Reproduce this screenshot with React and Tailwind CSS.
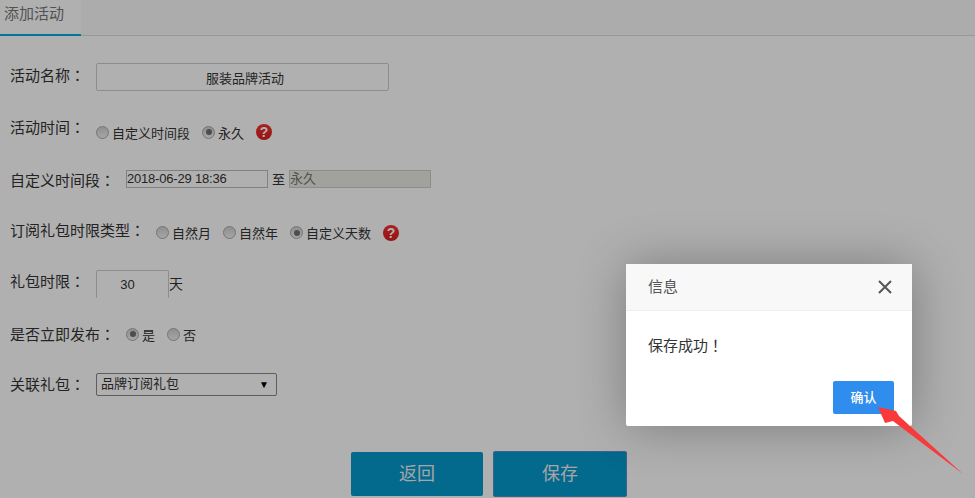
import React from "react";

const font = { fontFamily: '"Liberation Sans", "Noto Sans CJK SC", sans-serif' };

// the centred full-width punctuation comes from the TC cut
const Punct = ({ children }) => (
  <span className="font-['Noto_Sans_CJK_TC']">{children}</span>
);

const Radio = ({ label, checked }) => (
  <span className="flex items-center gap-[3px]">
    <span className="flex h-[13px] w-[13px] items-center justify-center rounded-full border border-[#a8a8a8] bg-gradient-to-b from-[#d0d0d0] to-[#f0f0f0]">
      {checked && <span className="h-[6px] w-[6px] rounded-full bg-[#707070]" />}
    </span>
    <span className="mt-[3px] text-[13px] leading-[16px]">{label}</span>
  </span>
);

const Help = () => (
  <span className="flex h-4 w-4 items-center justify-center rounded-full bg-gradient-to-b from-[#f43030] to-[#dc1c1c] text-[14px] font-bold leading-none text-white">
    ?
  </span>
);

const App = () => {
  return (
    <div
      className="relative h-[498px] w-[975px] overflow-hidden bg-white text-[#333]"
      style={font}
    >
      {/* TAB */}
      <div className="flex h-[36px] border-b border-[#ddd] bg-[#fafafa]">
        <div className="h-[36px] w-[81px] border-b-2 border-[#06a9e0] bg-white pl-[4px] pt-[3px] text-[15px] leading-[22px] text-[#777]">
          添加活动
        </div>
      </div>

      {/* FORM */}
      <div className="flex flex-col pl-[10px] pt-[27px] text-[15px]">
        <div className="flex h-[28px] items-center">
          <span className="mb-[3px] w-[86px]">活动名称<Punct>：</Punct></span>
          <input
            readOnly
            value="服装品牌活动"
            className="h-[28px] w-[293px] rounded-[2px] border border-[#ccc] pl-[5px] text-center text-[13px]"
          />
        </div>

        <div className="mt-[26px] flex h-[28px] items-center">
          <span className="mb-[6px] w-[86px]">活动时间<Punct>：</Punct></span>
          <span className="mt-[2px] flex items-center gap-[12px]">
            <Radio label="自定义时间段" />
            <Radio label="永久" checked />
            <Help />
          </span>
        </div>

        <div className="mt-[20px] flex h-[28px] items-center">
          <span className="mt-[4px] w-[116px]">自定义时间段<Punct>：</Punct></span>
          <input
            readOnly
            value="2018-06-29 18:36"
            className="h-[18px] w-[142px] border border-[#bbb] px-0 text-[13px] tracking-[-0.2px]"
          />
          <span className="mx-[4px] mt-[2px] text-[13px]">至</span>
          <input
            readOnly
            value="永久"
            className="h-[18px] w-[142px] border border-[#ccc] bg-[#ebebe4] text-[13px] text-[#777]"
          />
        </div>

        <div className="mt-[25px] flex h-[28px] items-center">
          <span className="mb-[2px] w-[146px]">订阅礼包时限类型<Punct>：</Punct></span>
          <span className="mt-[1px] flex items-center gap-[12px]">
            <Radio label="自然月" />
            <Radio label="自然年" />
            <Radio label="自定义天数" checked />
            <Help />
          </span>
        </div>

        <div className="mt-[24px] flex h-[28px] items-center">
          <span className="mb-[4px] w-[86px]">礼包时限<Punct>：</Punct></span>
          <input
            readOnly
            value="30"
            className="h-[28px] w-[73px] rounded-t-[2px] border border-b-0 border-[#ccc] pr-[10px] text-center text-[13px]"
          />
          <span className="text-[14px]">天</span>
        </div>

        <div className="mt-[22px] flex h-[28px] items-center">
          <span className="mt-[2px] w-[116px]">是否立即发布<Punct>：</Punct></span>
          <span className="flex items-center gap-[12px]">
            <Radio label="是" checked />
            <Radio label="否" />
          </span>
        </div>

        <div className="mt-[23px] flex h-[28px] items-center">
          <span className="w-[86px]">关联礼包<Punct>：</Punct></span>
          <div className="mb-[2px] flex h-[23px] w-[181px] items-center justify-between rounded-[2px] border border-[#888] bg-white pl-[4px] pr-[7px] text-[13px]">
            <span>品牌订阅礼包</span>
            <span className="text-[10px] text-black">▼</span>
          </div>
        </div>
      </div>

      {/* BUTTONS */}
      <div className="ml-[351px] mt-[52px] flex items-center gap-[10px] text-[18px] text-[#f0f0f0]">
        <button className="h-[44px] w-[132px] rounded-[2px] bg-[#0598cc]">返回</button>
        <button className="h-[46px] w-[134px] rounded-[2px] border border-[#5a8fd0] bg-[#0598cc]">保存</button>
      </div>

      {/* OVERLAY */}
      <div className="absolute inset-0 bg-black/[0.31]" />

      {/* DIALOG */}
      <div className="absolute left-[626px] top-[264px] h-[162px] w-[286px] rounded-[2px] bg-white shadow-[1px_1px_50px_rgba(0,0,0,0.3)]">
        <div className="flex h-[47px] items-center justify-between border-b border-[#eee] bg-[#f8f8f8] pl-[22px] pr-[20px] text-[15px] text-[#555]">
          <span>信息</span>
          <svg width="14" height="14" viewBox="0 0 14 14" fill="none" stroke="#555" strokeWidth="2">
            <path d="M1 1l12 12M13 1L1 13" />
          </svg>
        </div>
        <div className="pl-[22px] pt-[23px] text-[15px] leading-[22px] text-[#333]">保存成功<Punct>！</Punct></div>
        <div className="flex justify-end pr-[18px] pt-[24px]">
          <button className="h-[33px] w-[61px] rounded-[2px] bg-[#2f8ded] text-[13px] font-medium text-white">确认</button>
        </div>
      </div>

      {/* ARROW */}
      <svg className="absolute inset-0" width="975" height="498" viewBox="0 0 975 498">
        <polygon points="878,407 896,411 899,416 963,474 893,421 885,423" fill="#f83a3a" />
      </svg>
    </div>
  );
};

export default App;
